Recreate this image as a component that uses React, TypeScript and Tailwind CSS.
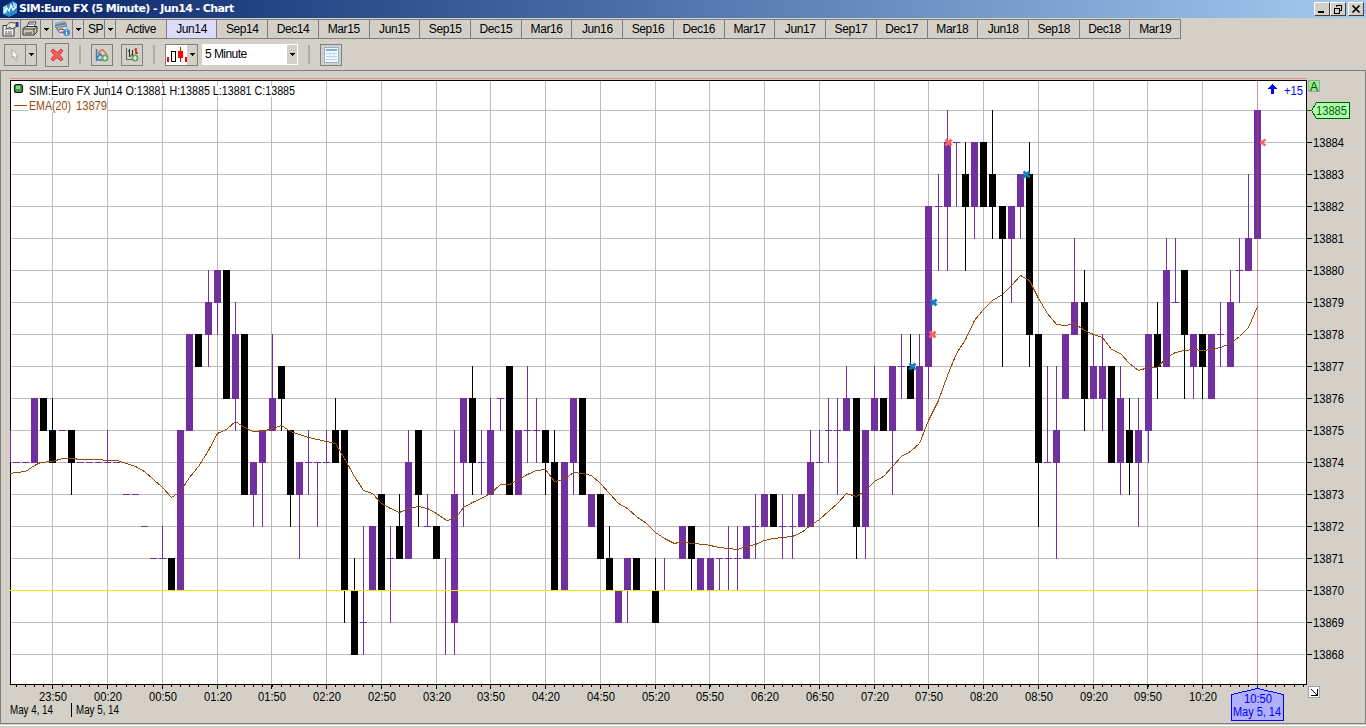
import type { ReactNode } from 'react';
import { clsx } from 'clsx';

const PURPLE = '#7030a0';
const GRID = '#bdbdbd';

const contracts = [
    'Active', 'Jun14', 'Sep14', 'Dec14', 'Mar15', 'Jun15', 'Sep15', 'Dec15', 'Mar16', 'Jun16', 'Sep16',
    'Dec16', 'Mar17', 'Jun17', 'Sep17', 'Dec17', 'Mar18', 'Jun18', 'Sep18', 'Dec18', 'Mar19',
];

type Bar = [color: 'p' | 'k', high: number, top: number, bottom: number, low: number];

// 5 minute bars starting at 23:30, prices are offsets from 13800
const bars: Bar[] = [
    ['p', 74, 74, 74, 74], ['p', 74, 74, 74, 74], ['p', 76, 76, 74, 74], ['k', 76, 76, 75, 75],
    ['k', 76, 75, 74, 74], ['p', 75, 75, 75, 75], ['k', 75, 75, 74, 73], ['p', 74, 74, 74, 74],
    ['p', 74, 74, 74, 74], ['p', 74, 74, 74, 74], ['p', 75, 74, 74, 74], ['p', 74, 74, 74, 74],
    ['p', 73, 73, 73, 73], ['p', 73, 73, 73, 73], ['p', 72, 72, 72, 72], ['p', 71, 71, 71, 71],
    ['p', 72, 71, 71, 71], ['k', 71, 71, 70, 70], ['p', 75, 75, 70, 70], ['p', 78, 78, 75, 75],
    ['k', 78, 78, 77, 77], ['p', 80, 79, 78, 77], ['p', 80, 80, 79, 78], ['k', 80, 80, 76, 76],
    ['p', 79, 78, 76, 75], ['k', 78, 78, 73, 73], ['p', 74, 74, 73, 72], ['p', 75, 75, 74, 72],
    ['p', 78, 76, 75, 75], ['k', 77, 77, 76, 75], ['k', 75, 75, 73, 72], ['p', 74, 74, 73, 71],
    ['p', 75, 74, 74, 73], ['p', 74, 74, 74, 72], ['p', 75, 74, 74, 74], ['k', 76, 75, 74, 74],
    ['k', 75, 75, 70, 69], ['k', 71, 70, 68, 68], ['p', 72, 69, 69, 68], ['p', 72, 72, 70, 70],
    ['k', 73, 73, 70, 70], ['p', 72, 71, 71, 69], ['k', 73, 72, 71, 71], ['p', 75, 74, 71, 71],
    ['k', 75, 75, 73, 72], ['p', 73, 72, 72, 72], ['k', 72, 72, 71, 71], ['p', 71, 70, 70, 68],
    ['p', 75, 73, 69, 68], ['p', 76, 76, 74, 72], ['k', 77, 76, 74, 73], ['p', 75, 74, 74, 73],
    ['p', 76, 75, 73, 73], ['p', 76, 76, 76, 75], ['k', 77, 77, 73, 73], ['p', 75, 75, 73, 73],
    ['p', 77, 75, 75, 74], ['p', 76, 75, 75, 74], ['k', 75, 75, 74, 73], ['k', 75, 74, 70, 70],
    ['p', 74, 74, 70, 70], ['p', 76, 76, 74, 73], ['k', 76, 76, 73, 73], ['p', 73, 73, 72, 72],
    ['k', 73, 73, 71, 71], ['k', 72, 71, 70, 70], ['p', 70, 70, 69, 69], ['p', 71, 71, 70, 69],
    ['k', 71, 71, 70, 70], ['p', 70, 70, 70, 70], ['k', 71, 70, 69, 69], ['p', 71, 70, 70, 70],
    ['p', 70, 70, 70, 70], ['p', 72, 72, 71, 71], ['k', 72, 72, 71, 70], ['p', 71, 71, 70, 70],
    ['p', 71, 71, 70, 70], ['p', 71, 71, 71, 70], ['p', 72, 71, 71, 70], ['p', 72, 71, 71, 70],
    ['p', 72, 72, 71, 71], ['p', 73, 72, 72, 71], ['p', 73, 73, 72, 72], ['k', 73, 73, 72, 72],
    ['p', 73, 72, 72, 71], ['p', 73, 72, 72, 71], ['p', 73, 73, 72, 72], ['p', 75, 74, 72, 72],
    ['p', 75, 74, 74, 74], ['p', 76, 75, 75, 74], ['p', 76, 75, 75, 73], ['p', 77, 76, 75, 75],
    ['k', 76, 76, 72, 71], ['p', 75, 75, 72, 71], ['p', 77, 76, 75, 75], ['k', 76, 76, 75, 75],
    ['p', 77, 77, 75, 73], ['p', 78, 77, 77, 76], ['k', 78, 77, 76, 76], ['p', 78, 77, 75, 75],
    ['p', 82, 82, 77, 76], ['p', 83, 82, 82, 80], ['p', 85, 84, 82, 80], ['p', 84, 84, 84, 82],
    ['k', 84, 83, 82, 80], ['p', 84, 84, 82, 81], ['k', 84, 84, 82, 82], ['k', 85, 83, 82, 81],
    ['k', 82, 82, 81, 77], ['p', 82, 82, 81, 79], ['p', 83, 83, 82, 81], ['k', 84, 83, 78, 77],
    ['k', 78, 78, 74, 72], ['p', 77, 74, 74, 74], ['p', 77, 75, 74, 71], ['p', 78, 78, 76, 76],
    ['p', 81, 79, 78, 78], ['k', 80, 79, 76, 75], ['p', 78, 77, 76, 76], ['p', 78, 77, 76, 75],
    ['k', 77, 77, 74, 74], ['p', 77, 76, 74, 73], ['k', 76, 75, 74, 73], ['p', 76, 75, 74, 72],
    ['p', 78, 78, 75, 74], ['k', 79, 78, 77, 76], ['p', 81, 80, 77, 77], ['p', 81, 79, 79, 79],
    ['k', 80, 80, 78, 76], ['p', 78, 78, 77, 76], ['k', 78, 78, 77, 76], ['p', 78, 78, 76, 76],
    ['p', 79, 78, 78, 77], ['p', 80, 79, 77, 77], ['p', 81, 80, 80, 79], ['p', 83, 81, 80, 80],
    ['p', 85, 85, 81, 81],
];

const ema =
    '10,473 16,472 25,471 34,465 40,462 52,461 62,458 75,458 77,459 98,459 107,460 117,460 126,463 135,466 144,471 153,479 162,487 ' +
    '171,497 180,491 189,477 198,466 208,450 217,433 226,429 235,421 244,427 253,431 262,431 272,428 281,425 290,431 ' +
    '299,434 308,437 317,439 326,441 335,443 344,458 354,476 363,490 372,493 381,503 390,508 399,512 408,508 418,506 ' +
    '427,508 436,513 446,520 455,518 463,507 472,502 481,498 490,493 500,484 509,484 518,479 527,474 536,470 545,469 ' +
    '554,481 564,479 573,472 582,473 591,475 600,483 609,493 618,503 627,508 636,516 646,523 655,532 664,538 674,543 ' +
    '682,541 691,543 705,544 719,547 728,548 737,549 746,546 755,544 764,540 773,538 782,537 792,536 801,532 810,525 ' +
    '819,519 828,511 837,503 846,493 856,496 865,490 874,481 883,476 892,466 901,456 910,451 919,443 928,420 938,400 ' +
    '947,375 956,353 965,339 974,320 983,309 992,300 1002,294 1011,285 1020,275 1029,280 1038,298 1047,313 1056,324 ' +
    '1065,325 1074,323 1084,330 1093,334 1102,337 1111,349 1120,353 1129,363 1138,370 1148,367 1157,367 1166,357 ' +
    '1175,352 1184,350 1193,349 1202,350 1211,349 1220,347 1230,343 1239,336 1248,327 1257,306';

const hours = Array.from({ length: 22 }, (_, i) => {
    const minutes = (23 * 60 + 50 + i * 30) % 1440;
    return `${String(Math.floor(minutes / 60)).padStart(2, '0')}:${String(minutes % 60).padStart(2, '0')}`;
});

const marks = [
    { x: 948, y: 142, color: '#ff6060' },
    { x: 1026, y: 174, color: '#1080c0' },
    { x: 933, y: 302, color: '#1080c0' },
    { x: 932, y: 334, color: '#ff6060' },
    { x: 912, y: 366, color: '#1080c0' },
];

const priceY = (price: number) => 110 + (85 - price) * 32;
const barX = (i: number) => 52 + 9 * i + (i % 16 === 0 ? i / 8 : Math.floor(i / 8) + 1);
const gridX = (i: number) => 52 + Math.ceil(i * 54.75);

function Label({ x, y, w, fill = '#000', children }: { x: number; y: number; w: number; fill?: string; children: string }) {
    return (
        <text x={x} y={y} textLength={w} lengthAdjust="spacingAndGlyphs" fill={fill} className="text-[12px]">
            {children}
        </text>
    );
}

function Candles() {
    return (
        <g>
            <rect x={10} y={430} width={1} height={32} fill={PURPLE} />
            {bars.map(([color, high, top, bottom, low], n) => {
                const x = barX(n - 4);
                const fill = color === 'p' ? PURPLE : '#000';
                return (
                    <g key={n} fill={fill}>
                        <rect x={x} y={priceY(high)} width={1} height={priceY(low) - priceY(high) + 1} />
                        <rect x={x - 3} y={priceY(top)} width={7} height={priceY(bottom) - priceY(top) + 1} />
                    </g>
                );
            })}
        </g>
    );
}

function Chart() {
    const prices = Array.from({ length: 18 }, (_, i) => 85 - i);

    return (
        <svg width={1364} height={652} viewBox="1 71 1364 652" shapeRendering="crispEdges" className="block">
            <rect x={10} y={78} width={1297} height={1} fill="#e09090" />
            <rect x={10} y={80} width={1297} height={605} fill="#fff" />

            {prices.map((p) => (
                <rect key={p} x={11} y={priceY(p)} width={1295} height={1} fill={GRID} />
            ))}
            {Array.from({ length: 22 }, (_, i) => (
                <rect key={i} x={gridX(i)} y={81} width={1} height={603} fill={GRID} />
            ))}

            {/* frame */}
            <rect x={10} y={80} width={1297} height={1} />
            <rect x={10} y={80} width={1} height={605} />
            <rect x={1306} y={80} width={1} height={605} />
            <rect x={10} y={684} width={1297} height={1} />

            <Candles />
            <rect x={10} y={590} width={1248} height={1} fill="#f5e610" />
            <polyline points={ema} transform="translate(.5 .5)" fill="none" stroke="#964b0a" strokeWidth={1} />
            <rect x={1257} y={81} width={1} height={604} fill="#c04040" fillOpacity={0.6} />

            {marks.map((m) => (
                <path
                    key={`${m.x}-${m.y}`}
                    d={`M${m.x - 2.5} ${m.y - 2.5}l6 6m0-6l-6 6`}
                    stroke={m.color}
                    strokeWidth={2.8}
                    shapeRendering="auto"
                />
            ))}
            <path d="M1261 142.5l4.5-3M1261 142.5l4.5 3M1260 142.5h4" stroke="#ff6060" strokeWidth={2.2} shapeRendering="auto" />

            {/* legend */}
            <rect x={28} y={86} width={268} height={11} fill="#fff" />
            <rect x={28} y={100} width={79} height={12} fill="#fff" />
            <rect x={14.5} y={84.5} width={8} height={8} rx={2} fill="#3f9848" stroke="#102810" strokeWidth={1.2} shapeRendering="auto" />
            <rect x={16} y={86} width={4} height={3} fill="#8fd093" />
            <Label x={29} y={95} w={266}>SIM:Euro FX Jun14 O:13881 H:13885 L:13881 C:13885</Label>
            <rect x={14} y={105} width={13} height={1} fill="#964b0a" />
            <Label x={29} y={110} w={42} fill="#964b0a">EMA(20)</Label>
            <Label x={76} y={110} w={31} fill="#964b0a">13879</Label>

            <path d="M1272.5 84L1277 89H1274V94H1271V89H1268Z" fill="#00f" />
            <Label x={1284} y={95} w={19} fill="#0000ff">+15</Label>

            {/* price axis */}
            <rect x={1308.5} y={80.5} width={11} height={11} fill="#90f090" stroke="#a0a0a0" />
            <text x={1310} y={91} textLength={8} lengthAdjust="spacingAndGlyphs" fill="#005000" className="text-[12px]">
                A
            </text>
            {prices.slice(1).map((p) => (
                <g key={p}>
                    <rect x={1307} y={priceY(p)} width={5} height={1} />
                    <Label x={1313} y={priceY(p) + 5} w={31}>{`138${p}`}</Label>
                </g>
            ))}
            <rect x={1306} y={110} width={6} height={1} fill="#006000" />
            <path d="M1311.500 110.5L1316.500 102.500H1349.500V118.500H1316.500Z" fill="#b0ffb0" stroke="#006000" />
            <Label x={1316} y={115} w={31} fill="#006000">13885</Label>

            {/* time axis */}
            {Array.from({ length: 142 }, (_, i) => (
                <rect key={i} x={barX(i - 4)} y={685} width={1} height={2} />
            ))}
            {hours.map((t, i) => (
                <g key={t}>
                    <rect x={gridX(i)} y={685} width={1} height={4} />
                    <Label x={gridX(i) - 13} y={701} w={28}>{t}</Label>
                </g>
            ))}
            <Label x={10} y={714} w={43}>May 4, 14</Label>
            <rect x={71} y={703} width={1} height={14} />
            <Label x={76} y={714} w={43}>May 5, 14</Label>

            <path d="M1257.500 688.500L1283.500 694.500V720.500H1231.500V694.500Z" fill="#b0b0ff" stroke="#00f" />
            <rect x={1257} y={685} width={1} height={4} fill="#00f" />
            <Label x={1244} y={703} w={28} fill="#0000ff">10:50</Label>
            <Label x={1233} y={716} w={48} fill="#0000ff">May 5, 14</Label>

            <rect x={1308.500} y={686.500} width={11} height={11} fill="#fff" stroke="#a0a0a0" />
            <path d="M1311 689L1317 695M1317.500 689V695.500H1311" fill="none" stroke="#000" />
        </svg>
    );
}

function WindowButton({ children }: { children: ReactNode }) {
    return (
        <button className="flex h-[14px] w-4 items-center justify-center border border-t-white border-r-[#404040] border-b-[#404040] border-l-white bg-[#d4d0c8]">
            <svg width={12} height={12} viewBox="0 0 12 12" fill="none" stroke="#000" shapeRendering="crispEdges">
                {children}
            </svg>
        </button>
    );
}

function TitleBar() {
    return (
        <div className="flex h-[18px] items-center bg-linear-to-r from-[#0a246a] to-[#a6caf0] pl-[2px]">
            <svg width={16} height={16} viewBox="0 0 16 16" className="shrink-0">
                <path d="M1 6L11 0L15 3L15 12L7 16L1 13Z" fill="#2789cc" />
                <path d="M1 6L5 4V12L1 13ZM11 1L15 3V7L11 6Z" fill="#91d4f4" />
                <path d="M2 11L5 7L7 10L9 4L11 9L14 6" fill="none" stroke="#fff" strokeWidth={1.3} />
            </svg>
            <span className="ml-px text-[11px] font-bold tracking-[-0.6px] whitespace-nowrap text-white [font-family:'DejaVu_Sans',sans-serif]">
                SIM:Euro FX (5 Minute) - Jun14 - Chart
            </span>
            <div className="mr-[2px] ml-auto flex">
                <WindowButton>
                    <path d="M2 9H8" strokeWidth={2} />
                </WindowButton>
                <WindowButton>
                    <path d="M4 2H10M4.500 2V4M9.500 2V7.500H8" />
                    <path d="M2 5H8M2.500 5V10.500H7.500V5" />
                </WindowButton>
                <span className="w-[2px]" />
                <WindowButton>
                    <path d="M2.500 2.500L9.500 9.500M9.500 2.500L2.500 9.500" strokeWidth={1.7} shapeRendering="auto" />
                </WindowButton>
            </div>
        </div>
    );
}

function Caret() {
    return (
        <svg width={5} height={3} viewBox="0 0 5 3" className="shrink-0" shapeRendering="crispEdges">
            <path d="M0 0H5L2.500 3Z" />
        </svg>
    );
}

function ContractTabs() {
    const cell = 'flex items-center justify-center border-r border-[#808080]';

    return (
        <div className="mt-px flex h-5 border-y border-[#808080] w-[1181px]">
            <div className={clsx(cell, 'w-[21px]')}>
                <svg width={17} height={16} viewBox="0 0 17 16">
                    <path d="M1 4.500H12V15H1Z" fill="#f8f8f8" stroke="#303030" />
                    <path d="M3 8H5M3 11H5M6 8H10M6 11H10M3 13H10" stroke="#555" />
                    <path d="M4 5L8 1.500L14 2V6L10 8L8 6L5 8Z" fill="#e8e0d8" stroke="#303030" strokeWidth={0.8} />
                    <path d="M14 1H16.500V6H14Z" fill="#2d3ca0" />
                </svg>
            </div>
            <div className={clsx(cell, 'w-5')}>
                <svg width={17} height={16} viewBox="0 0 17 16">
                    <path d="M5 6L7 1H14L12 6Z" fill="#fff" stroke="#404040" />
                    <path d="M1 7.500L4 5.500H15V11L12 14H1Z" fill="#c8c8c0" stroke="#303030" />
                    <path d="M1 8H12L15 6M12 8V13M7 3H12M3 12H10" fill="none" stroke="#404040" />
                    <path d="M9 10H11" stroke="#d8c000" strokeWidth={1.5} />
                </svg>
            </div>
            <div className={clsx(cell, 'w-3')}><Caret /></div>
            <div className={clsx(cell, 'w-5')}>
                <svg width={17} height={16} viewBox="0 0 17 16">
                    <path d="M1 2L10 0L13 3L12 11L5 12L1 6Z" fill="#6689a0" />
                    <path d="M1 3L10 1M2 6L12 4" stroke="#9fbfd0" />
                    <path d="M4 7L12 6L14 14L7 15Z" fill="#dce6f0" />
                    <path d="M5 9Q7 7 10 9M6 12Q9 10 11 13" fill="none" stroke="#d04838" strokeWidth={1.5} />
                    <circle cx={12.500} cy={11.500} r={3.500} fill="#3d8bd8" />
                    <path d="M12.500 9V10M12.500 11V14" stroke="#fff" strokeWidth={1.3} />
                </svg>
            </div>
            <div className={clsx(cell, 'w-[11px]')}><Caret /></div>
            <div className={clsx(cell, 'w-[21px] pl-[3px] text-[12px] tracking-[-0.5px]')}>SP</div>
            <div className={clsx(cell, 'w-[11px]')}><Caret /></div>
            <div className="flex flex-1">
                {contracts.map((name) => (
                    <button
                        key={name}
                        className={clsx(cell, 'flex-1 text-[12px] tracking-[-0.4px]', name === 'Jun14' && 'bg-[#dcdcfa]')}
                    >
                        {name}
                    </button>
                ))}
            </div>
        </div>
    );
}

function Separator() {
    return <span className="h-[19px] w-[2px] bg-[#b0aca6]" />;
}

function Toolbar() {
    const button = 'flex items-center justify-center border border-[#808080]';

    return (
        <div className="flex h-[31px] items-center pl-1">
            <div className="flex h-[22px] w-[33px] border border-[#808080]">
                <div className="flex w-[21px] items-center justify-center border-r border-[#808080]">
                    <svg width={12} height={14} viewBox="0 0 12 14">
                        <path d="M3 1V10L5 8.500L7 12.500L8.500 11.500L7 8H9.500Z" fill="#f4f4f4" stroke="#a8a8a8" />
                    </svg>
                </div>
                <div className="flex flex-1 items-center justify-center"><Caret /></div>
            </div>
            <div className={clsx(button, 'ml-2 h-6 w-6')}>
                <svg width={14} height={14} viewBox="0 0 14 14">
                    <path d="M1 3L3 1L7 4.500L11 1L13 3L9.500 7L13 11L11 13L7 9.500L3 13L1 11L4.500 7Z" fill="#f4605a" stroke="#d03030" />
                </svg>
            </div>
            <div className="ml-[10px] flex"><Separator /></div>
            <div className={clsx(button, 'ml-[10px] size-[22px]')}>
                <svg width={14} height={14} viewBox="0 0 14 14" fill="none">
                    <path d="M1.500 1V12H9" stroke="#3578b8" strokeWidth={1.5} />
                    <path d="M2 10L5 6L8 9" stroke="#3578b8" strokeWidth={1.5} />
                    <path d="M3 6Q6 0 9 3T12 8" stroke="#e06858" strokeWidth={1.5} />
                    <circle cx={10} cy={10} r={3.500} fill="#62a85c" />
                    <path d="M8 10H12M10 8V12" stroke="#fff" strokeWidth={1.2} />
                </svg>
            </div>
            <div className={clsx(button, 'ml-2 size-[22px]')}>
                <svg width={14} height={14} viewBox="0 0 14 14" fill="none">
                    <path d="M1.500 0V11.500H8" stroke="#606060" />
                    <path d="M4.500 1V9M3 3H4.500M4.500 8H6M7.500 2V8M7.500 7H6" stroke="#303030" />
                    <path d="M11 0V6M9.500 2H11M11 5H13" stroke="#d02020" strokeWidth={1.5} />
                    <circle cx={10} cy={10} r={3.500} fill="#62a85c" />
                    <path d="M8 10H12M10 8V12" stroke="#fff" strokeWidth={1.2} />
                </svg>
            </div>
            <div className="ml-[10px] flex"><Separator /></div>
            <div className="ml-[10px] flex h-[22px] w-[33px] border border-[#808080]">
                <svg width={21} height={20} viewBox="0 0 21 20" shapeRendering="crispEdges" className="bg-white">
                    <rect x={1} y={12} width={2} height={5} fill="#f00" />
                    <rect x={5.500} y={6.500} width={4} height={10} fill="#fff" stroke="#000" />
                    <rect x={12} y={6} width={5} height={7} fill="#f00" />
                    <rect x={14} y={2} width={1} height={15} fill="#f00" />
                    <rect x={19} y={12} width={2} height={5} fill="#f00" />
                </svg>
                <div className="flex flex-1 items-center justify-center"><Caret /></div>
            </div>
            <div className="ml-1 flex h-[21px] w-[96px] bg-white text-[12px]">
                <span className="flex-1 pt-px pl-[3px] leading-[19px] tracking-[-0.55px]">5 Minute</span>
                <span className="my-px mr-px flex w-[10px] items-center justify-center bg-[#d4d0c8]"><Caret /></span>
            </div>
            <div className="ml-[10px] flex"><Separator /></div>
            <div className={clsx(button, 'ml-[10px] size-[22px]')}>
                <svg width={15} height={16} viewBox="0 0 15 16" shapeRendering="crispEdges">
                    <rect x={0.500} y={0.500} width={14} height={15} fill="#f4f9fd" stroke="#8ab4da" />
                    <rect x={2} y={2} width={11} height={2} fill="#7fb0dc" />
                    <path d="M2 6.500H13M2 9.500H13M2 12.500H13" stroke="#b4d2ea" />
                    <path d="M5.500 5V14M9.500 5V14" stroke="#d4e4f2" />
                </svg>
            </div>
        </div>
    );
}

export default function App() {
    return (
        <div className="flex h-[728px] w-[1366px] flex-col overflow-hidden bg-[#d4d0c8] text-black [font-family:'Liberation_Sans',Arial,sans-serif]">
            <TitleBar />
            <ContractTabs />
            <Toolbar />
            <main className="h-[654px] border border-[#808080]">
                <Chart />
            </main>
            <div className="mt-px h-px bg-white" />
        </div>
    );
}
